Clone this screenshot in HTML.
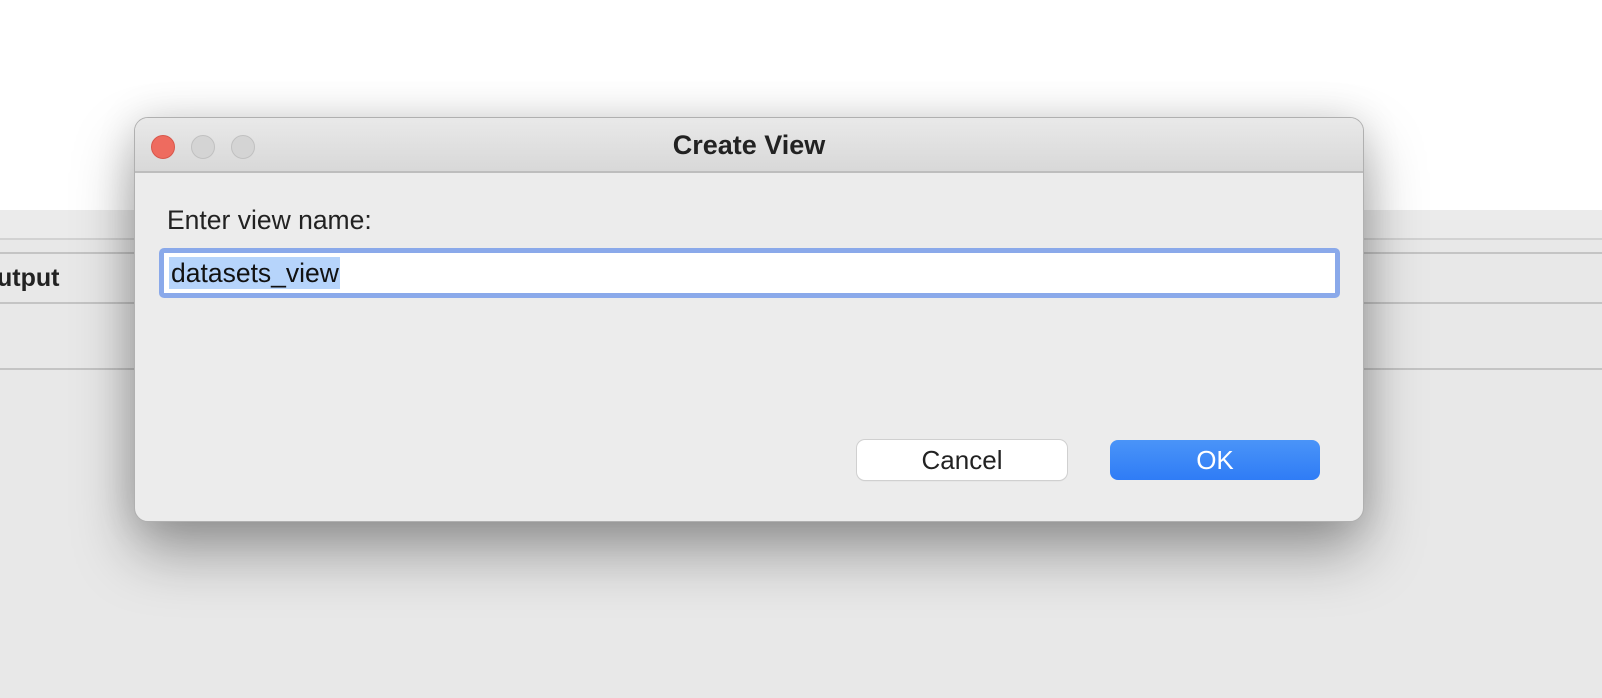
<!DOCTYPE html>
<html><head><meta charset="utf-8"><style>
*{margin:0;padding:0;box-sizing:border-box}
body{width:1602px;height:698px;overflow:hidden;position:relative;background:#e8e8e8;font-family:"Liberation Sans",Arial,sans-serif}
.top{position:absolute;left:0;top:0;width:1602px;height:210px;background:#fff}
.band{position:absolute;left:0;width:1602px;background:#ebebeb}
.line{position:absolute;left:0;width:1602px;height:2px;background:#c4c4c4}
.out{position:absolute;left:-3px;top:264px;font-weight:bold;font-size:25px;color:#222}
.dlg{position:absolute;left:134px;top:117px;width:1230px;height:405px;border-radius:14px;background:#ececec;border:1px solid #b0b0b0;box-shadow:0 30px 60px rgba(0,0,0,.35),0 0 40px rgba(0,0,0,.12);overflow:hidden}
.tb{position:absolute;left:0;top:0;width:100%;height:55px;background:linear-gradient(#e9e9e9,#d8d8d8);border-bottom:2px solid #bdbdbd}
.tl{position:absolute;top:17px;width:24px;height:24px;border-radius:50%;background:#d4d4d4;border:1px solid #c0c0c0}
.title{position:absolute;left:0;width:100%;top:12px;text-align:center;font-weight:bold;font-size:27px;color:#222}
.lbl{position:absolute;left:32px;top:87px;font-size:26.5px;color:#222}
.ring{position:absolute;left:24px;top:130px;width:1181px;height:50px;border-radius:5px;background:#8aa9ea}
.inp{position:absolute;left:5px;top:5px;right:5px;bottom:5px;background:#fff}
.sel{position:absolute;left:5px;top:4px;height:32px;background:#b6d4fb;font-size:26.5px;line-height:32px;color:#111;padding:0 1px 0 2px}
.btn{position:absolute;top:322px;width:210px;height:40px;border-radius:8px;font-size:26px;text-align:center;line-height:40px}
</style></head><body>
<div class="top"></div>
<div class="band" style="top:210px;height:29px"></div>
<div class="line" style="top:238px;background:#d2d2d2"></div>
<div class="line" style="top:252px"></div>
<div class="line" style="top:302px"></div>
<div class="line" style="top:368px"></div>
<div class="out">utput</div>
<div class="dlg">
 <div class="tb">
  <div class="tl" style="left:16px;background:#ee6b5f;border-color:#d8574b"></div>
  <div class="tl" style="left:56px"></div>
  <div class="tl" style="left:96px"></div>
  <div class="title">Create View</div>
 </div>
 <div class="lbl">Enter view name:</div>
 <div class="ring"><div class="inp"><div class="sel">datasets_view</div></div></div>
 <div class="btn" style="left:722px;background:#fff;color:#222;box-shadow:0 0 0 1px #d0d0d0,0 1px 1px rgba(0,0,0,.15)">Cancel</div>
 <div class="btn" style="left:975px;background:linear-gradient(#4a94f8,#2f7cf6);color:#fff">OK</div>
</div>
</body></html>
